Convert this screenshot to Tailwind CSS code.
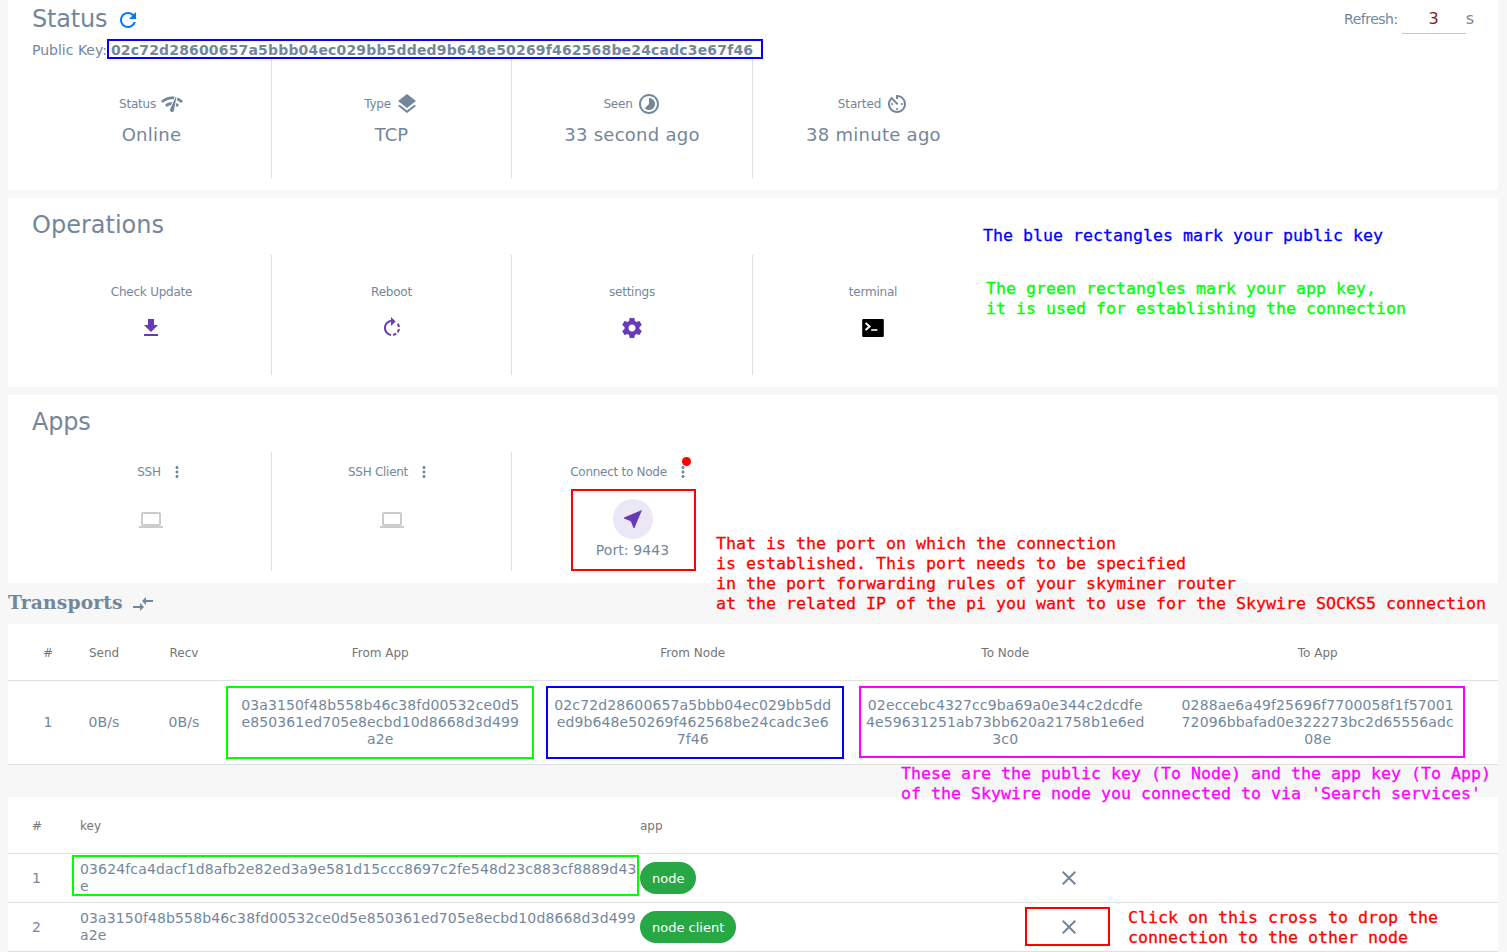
<!DOCTYPE html>
<html lang="en">
<head>
<meta charset="utf-8">
<title>Node status</title>
<script src="https://cdn.jsdelivr.net/npm/@tailwindcss/browser@4"></script>
</head>
<body class="relative h-[952px] overflow-hidden bg-[#f7f7f7] pl-2 pr-[9px] font-['DejaVu_Sans',sans-serif] text-sm text-[#73879c]">

<svg class="hidden">
  <symbol id="refresh" viewBox="0 0 24 24"><path d="M17.65 6.35C16.2 4.9 14.21 4 12 4c-4.42 0-7.99 3.58-7.99 8s3.57 8 7.99 8c3.73 0 6.84-2.55 7.73-6h-2.08c-.82 2.33-3.04 4-5.65 4-3.31 0-6-2.69-6-6s2.69-6 6-6c1.66 0 3.14.69 4.22 1.78L13 11h7V4l-2.35 2.35z"/></symbol>
  <symbol id="network" viewBox="0 0 24 24"><path d="M15.9 5c-.17 0-.32.09-.41.23l-.07.15-5.18 11.65c-.16.29-.26.61-.26.96 0 1.11.9 2.01 2.01 2.01.96 0 1.77-.68 1.96-1.59l.01-.03L16.4 5.5c0-.28-.22-.5-.5-.5zM1 9l2 2c2.88-2.88 6.79-4.08 10.53-3.62l1.19-2.68C9.89 3.84 4.74 5.27 1 9zm20 2l2-2c-1.64-1.64-3.55-2.82-5.59-3.57l-.53 2.82c1.5.62 2.9 1.53 4.12 2.75zm-4 4l2-2c-.8-.8-1.7-1.42-2.66-1.89l-.55 2.92c.42.27.83.59 1.21.97zM5 13l2 2c1.13-1.13 2.56-1.79 4.03-2l1.28-2.88c-2.63-.08-5.3.87-7.31 2.88z"/></symbol>
  <symbol id="layers" viewBox="0 0 24 24"><path d="M11.99 18.54l-7.37-5.73L3 14.07l9 7 9-7-1.63-1.27-7.38 5.74zM12 16l7.36-5.73L21 9l-9-7-9 7 1.63 1.27L12 16z"/></symbol>
  <symbol id="timelapse" viewBox="0 0 24 24"><path d="M16.24 7.76C15.07 6.59 13.54 6 12 6v6l-4.24 4.24c2.34 2.34 6.14 2.34 8.49 0 2.34-2.34 2.34-6.14-.01-8.48zM12 2C6.48 2 2 6.48 2 12s4.48 10 10 10 10-4.48 10-10S17.52 2 12 2zm0 18c-4.42 0-8-3.58-8-8s3.58-8 8-8 8 3.58 8 8-3.58 8-8 8z"/></symbol>
  <symbol id="timer" viewBox="0 0 24 24"><path d="M11 17c0 .55.45 1 1 1s1-.45 1-1-.45-1-1-1-1 .45-1 1zm0-14v4h2V5.08c3.39.49 6 3.39 6 6.92 0 3.87-3.13 7-7 7s-7-3.13-7-7c0-1.68.59-3.22 1.58-4.42L12 13l1.41-1.41-6.8-6.8v.02C4.42 6.45 3 9.05 3 12c0 4.97 4.02 9 9 9 4.97 0 9-4.03 9-9s-4.03-9-9-9h-1zm7 9c0-.55-.45-1-1-1s-1 .45-1 1 .45 1 1 1 1-.45 1-1zM6 12c0 .55.45 1 1 1s1-.45 1-1-.45-1-1-1-1 .45-1 1z"/></symbol>
  <symbol id="download" viewBox="0 0 24 24"><path d="M19 9h-4V3H9v6H5l7 7 7-7zM5 18v2h14v-2H5z"/></symbol>
  <symbol id="rotate" viewBox="0 0 24 24"><path d="M15.55 5.55L11 1v3.07C7.06 4.56 4 7.92 4 12s3.05 7.44 7 7.93v-2.02c-2.84-.48-5-2.94-5-5.91s2.16-5.43 5-5.91V10l4.55-4.45zM19.93 11c-.17-1.39-.72-2.73-1.62-3.89l-1.42 1.42c.54.75.88 1.6 1.02 2.47h2.02zM13 17.9v2.02c1.39-.17 2.74-.71 3.9-1.61l-1.44-1.44c-.75.54-1.59.89-2.46 1.03zm3.89-2.42l1.42 1.41c.9-1.16 1.45-2.5 1.62-3.89h-2.02c-.14.87-.48 1.72-1.02 2.48z"/></symbol>
  <symbol id="settings" viewBox="0 0 24 24"><path d="M19.43 12.98c.04-.32.07-.64.07-.98s-.03-.66-.07-.98l2.11-1.65c.19-.15.24-.42.12-.64l-2-3.46c-.12-.22-.39-.3-.61-.22l-2.49 1c-.52-.4-1.08-.73-1.69-.98l-.38-2.65C14.46 2.18 14.25 2 14 2h-4c-.25 0-.46.18-.49.42l-.38 2.65c-.61.25-1.17.59-1.69.98l-2.49-1c-.23-.09-.49 0-.61.22l-2 3.46c-.13.22-.07.49.12.64l2.11 1.65c-.04.32-.07.65-.07.98s.03.66.07.98l-2.11 1.65c-.19.15-.24.42-.12.64l2 3.46c.12.22.39.3.61.22l2.49-1c.52.4 1.08.73 1.69.98l.38 2.65c.03.24.24.42.49.42h4c.25 0 .46-.18.49-.42l.38-2.65c.61-.25 1.17-.59 1.69-.98l2.49 1c.23.09.49 0 .61-.22l2-3.46c.12-.22.07-.49-.12-.64l-2.11-1.65zM12 15.5c-1.93 0-3.5-1.57-3.5-3.5s1.57-3.5 3.5-3.5 3.5 1.57 3.5 3.5-1.57 3.5-3.5 3.5z"/></symbol>
  <symbol id="terminal" viewBox="0 0 24 24"><rect x="1.2" y="3" width="21.6" height="18" rx="1.2" fill="#000"/><path d="M4.6 7l4 3.5-4 3.5" fill="none" stroke="#fff" stroke-width="2"/><path d="M10.2 13.2h6.2v1.6h-6.2z" fill="#fff"/></symbol>
  <symbol id="laptop" viewBox="0 0 24 24"><path d="M20 18c1.1 0 1.99-.9 1.99-2L22 6c0-1.1-.9-2-2-2H4c-1.1 0-2 .9-2 2v10c0 1.1.9 2 2 2H0v2h24v-2h-4zM4 6h16v10H4V6z"/></symbol>
  <symbol id="more" viewBox="0 0 24 24"><path d="M12 8c1.1 0 2-.9 2-2s-.9-2-2-2-2 .9-2 2 .9 2 2 2zm0 2c-1.1 0-2 .9-2 2s.9 2 2 2 2-.9 2-2-.9-2-2-2zm0 6c-1.1 0-2 .9-2 2s.9 2 2 2 2-.9 2-2-.9-2-2-2z"/></symbol>
  <symbol id="near" viewBox="0 0 24 24"><path d="M21 3L3 10.53v.98l6.84 2.65L12.48 21h.98L21 3z"/></symbol>
  <symbol id="compare" viewBox="0 0 24 24"><path d="M9.01 14H2v2h7.01v3L13 15l-3.99-4v3zm5.98-1v-3H22V8h-7.01V5L11 9l3.99 4z"/></symbol>
  <symbol id="clear" viewBox="0 0 24 24"><path d="M19 6.41L17.59 5 12 10.59 6.41 5 5 6.41 10.59 12 5 17.59 6.41 19 12 13.41 17.59 19 19 17.59 13.41 12z"/></symbol>
</svg>

<!-- Status -->
<section class="flex h-[190px] flex-col rounded-b-xs bg-white px-6">
  <div class="flex h-[37px] items-center">
    <h2 class="text-2xl tracking-[-0.2px]">Status</h2>
    <svg class="ml-[9px] mt-[3px] size-6 fill-[#007bff]"><use href="#refresh"/></svg>
    <div class="ml-auto flex h-[34px] items-center self-start pt-1">
      <span class="tracking-[-0.5px]">Refresh:</span>
      <span class="ml-1 flex h-[30px] w-16 items-center justify-center border-b border-[#c6c6c6] text-base text-[#7f1d1d]">3</span>
      <span class="text-base">s</span>
    </div>
  </div>
  <div class="flex h-[22px] items-center gap-1 pt-[3px]"><span>Public Key:</span><b class="tracking-[0.165px]">02c72d28600657a5bbb04ec029bb5dded9b648e50269f462568be24cadc3e67f46</b></div>
  <div class="grid h-[119px] grid-cols-[240px_240px_241px_240px] text-center">
    <div class="border-r border-[#e0e0e0] pt-[33px]">
      <div class="flex h-6 items-center justify-center gap-1 text-xs tracking-[-0.22px]">Status <svg class="size-6 fill-current"><use href="#network"/></svg></div>
      <div class="pt-[5px] text-lg tracking-[0.27px]">Online</div>
    </div>
    <div class="border-r border-[#e0e0e0] pt-[33px]">
      <div class="flex h-6 items-center justify-center gap-1 text-xs tracking-[-0.22px]">Type <svg class="size-6 fill-current"><use href="#layers"/></svg></div>
      <div class="pt-[5px] text-lg">TCP</div>
    </div>
    <div class="border-r border-[#e0e0e0] pt-[33px]">
      <div class="flex h-6 items-center justify-center gap-1 text-xs tracking-[-0.22px]">Seen <svg class="size-6 fill-current"><use href="#timelapse"/></svg></div>
      <div class="pt-[5px] text-lg tracking-[0.27px]">33 second ago</div>
    </div>
    <div class="pl-px pt-[33px]">
      <div class="flex h-6 items-center justify-center gap-1 text-xs tracking-[-0.15px]">Started <svg class="size-6 fill-current"><use href="#timer"/></svg></div>
      <div class="pt-[5px] text-lg tracking-[0.27px]">38 minute ago</div>
    </div>
  </div>
</section>

<!-- Operations -->
<section class="mt-2 h-[189px] rounded-xs bg-white px-6 pt-[11px]">
  <h2 class="text-2xl">Operations</h2>
  <div class="mt-[14px] grid h-[120px] grid-cols-[240px_240px_241px_240px] text-center text-xs tracking-[-0.22px]">
    <div class="flex flex-col items-center border-r border-[#e0e0e0] pt-[29px]">Check Update<svg class="-ml-px mt-4 size-6 fill-[#673ab7]"><use href="#download"/></svg></div>
    <div class="flex flex-col items-center border-r border-[#e0e0e0] pt-[29px]">Reboot<svg class="mt-4 size-6 fill-[#673ab7]"><use href="#rotate"/></svg></div>
    <div class="flex flex-col items-center border-r border-[#e0e0e0] pt-[29px]">settings<svg class="mt-4 size-6 fill-[#673ab7]"><use href="#settings"/></svg></div>
    <div class="flex flex-col items-center pt-[29px]">terminal<svg class="mt-4 size-6"><use href="#terminal"/></svg></div>
  </div>
</section>

<!-- Apps -->
<section class="mt-2 h-[188px] rounded-xs bg-white px-6 pt-[11px]">
  <h2 class="text-2xl tracking-[-0.2px]">Apps</h2>
  <div class="mt-[14px] grid h-[119px] grid-cols-[240px_240px_241px_240px] text-center">
    <div class="flex flex-col items-center border-r border-[#e0e0e0] pt-[11px]">
      <div class="flex h-[18px] items-center gap-[7px] pl-5 text-xs tracking-[-0.27px]">SSH <svg class="size-[18px] fill-current"><use href="#more"/></svg></div>
      <svg class="-ml-px mt-[27px] size-6 fill-[#cccccc]"><use href="#laptop"/></svg>
    </div>
    <div class="flex flex-col items-center border-r border-[#e0e0e0] pt-[11px]">
      <div class="flex h-[18px] items-center gap-[7px] pr-0.5 text-xs tracking-[-0.27px]">SSH Client <svg class="size-[18px] fill-current"><use href="#more"/></svg></div>
      <svg class="mt-[27px] size-6 fill-[#cccccc]"><use href="#laptop"/></svg>
    </div>
    <div class="flex flex-col items-center pt-[11px]">
      <div class="relative flex h-[18px] items-center gap-[7px] pr-[3px] text-xs tracking-[-0.27px]">Connect to Node <svg class="size-[18px] fill-current"><use href="#more"/></svg>
        <i class="absolute -top-[6px] right-1 size-[9px] rounded-full bg-[#ff0000]"></i>
      </div>
      <div class="mt-[18px] flex size-10 items-center justify-center rounded-full bg-[#ebe7f6]"><svg class="size-6 fill-[#673ab7]"><use href="#near"/></svg></div>
      <div class="mt-px tracking-[0.1px]">Port: 9443</div>
    </div>
  </div>
</section>

<h3 class="flex h-[41px] items-center gap-2 pb-0.5 font-['DejaVu_Serif',serif] text-[18.72px] font-bold tracking-[0.15px]">Transports <svg class="mt-0.5 size-6 fill-current"><use href="#compare"/></svg></h3>

<!-- Transports -->
<section class="bg-white text-center">
  <div class="grid h-[57px] grid-cols-[32px_80px_80px_1fr_1fr_1fr_1fr] items-center border-b border-[#e0e0e0] px-6 pt-0.5 text-xs text-[#757575]">
    <span>#</span><span>Send</span><span>Recv</span><span>From App</span><span>From Node</span><span>To Node</span><span>To App</span>
  </div>
  <div class="grid h-[84px] grid-cols-[32px_80px_80px_1fr_1fr_1fr_1fr] items-center border-b border-[#e0e0e0] px-6 leading-[17px] tracking-[0.13px]">
    <span>1</span><span>0B/s</span><span>0B/s</span>
    <span>03a3150f48b558b46c38fd00532ce0d5<br>e850361ed705e8ecbd10d8668d3d499<br>a2e</span>
    <span>02c72d28600657a5bbb04ec029bb5dd<br>ed9b648e50269f462568be24cadc3e6<br>7f46</span>
    <span>02eccebc4327cc9ba69a0e344c2dcdfe<br>4e59631251ab73bb620a21758b1e6ed<br>3c0</span>
    <span>0288ae6a49f25696f7700058f1f57001<br>72096bbafad0e322273bc2d65556adc<br>08e</span>
  </div>
</section>

<!-- App keys -->
<section class="mt-8 bg-white">
  <div class="grid h-[57px] grid-cols-[48px_560px_394px_1fr] items-center border-b border-[#e0e0e0] px-6 pt-0.5 text-xs text-[#757575]">
    <span>#</span><span>key</span><span>app</span>
  </div>
  <div class="grid h-[49px] grid-cols-[48px_560px_417px_1fr] items-center border-b border-[#e0e0e0] px-6 leading-[17px]">
    <span>1</span>
    <span class="tracking-[0.15px]">03624fca4dacf1d8afb2e82ed3a9e581d15ccc8697c2fe548d23c883cf8889d43<br>e</span>
    <span class="flex h-8 items-center justify-self-start rounded-full bg-[#28a745] px-3 text-[13px] text-white">node</span>
    <svg class="size-6 fill-current"><use href="#clear"/></svg>
  </div>
  <div class="grid h-[49px] grid-cols-[48px_560px_417px_1fr] items-center border-b border-[#e0e0e0] px-6 leading-[17px]">
    <span>2</span>
    <span class="tracking-[0.13px]">03a3150f48b558b46c38fd00532ce0d5e850361ed705e8ecbd10d8668d3d499<br>a2e</span>
    <span class="flex h-8 items-center justify-self-start rounded-full bg-[#28a745] px-3 text-[13px] text-white">node client</span>
    <svg class="size-6 fill-current"><use href="#clear"/></svg>
  </div>
</section>

<!-- Highlight boxes drawn over the page -->
<div class="absolute left-[107px] top-[39px] h-5 w-[656px] border-2 border-[#0000ff]"></div>
<div class="absolute left-[571px] top-[489px] h-[82px] w-[125px] border-2 border-[#ff0000]"></div>
<div class="absolute left-[226px] top-[686px] h-[73px] w-[308px] border-2 border-[#00ff00]"></div>
<div class="absolute left-[546px] top-[686px] h-[73px] w-[298px] border-2 border-[#0000ff]"></div>
<div class="absolute left-[859px] top-[686px] h-[72px] w-[606px] border-2 border-[#ff00ff]"></div>
<div class="absolute left-[72px] top-[855px] h-[41px] w-[567px] border-2 border-[#00ff00]"></div>
<div class="absolute left-[1025px] top-[907px] h-[39px] w-[85px] border-2 border-[#ff0000]"></div>

<!-- Notes over the page -->
<div class="absolute inset-0 font-['DejaVu_Sans_Mono',monospace] text-[16.61px] leading-5 whitespace-nowrap [-webkit-text-stroke:0.3px_currentColor]">
  <p class="absolute left-[983px] top-[226px] text-[#0000ff]">The blue rectangles mark your public key</p>
  <p class="absolute left-[986px] top-[279px] text-[#00ff00]">The green rectangles mark your app key,<br>it is used for establishing the connection</p>
  <p class="absolute left-[716px] top-[534px] text-[#ff0000]">That is the port on which the connection<br>is established. This port needs to be specified<br>in the port forwarding rules of your skyminer router<br>at the related IP of the pi you want to use for the Skywire SOCKS5 connection</p>
  <p class="absolute left-[901px] top-[764px] text-[#ff00ff]">These are the public key (To Node) and the app key (To App)<br>of the Skywire node you connected to via 'Search services'</p>
  <p class="absolute left-[1128px] top-[908px] text-[#ff0000]">Click on this cross to drop the<br>connection to the other node</p>
</div>
</body>
</html>
